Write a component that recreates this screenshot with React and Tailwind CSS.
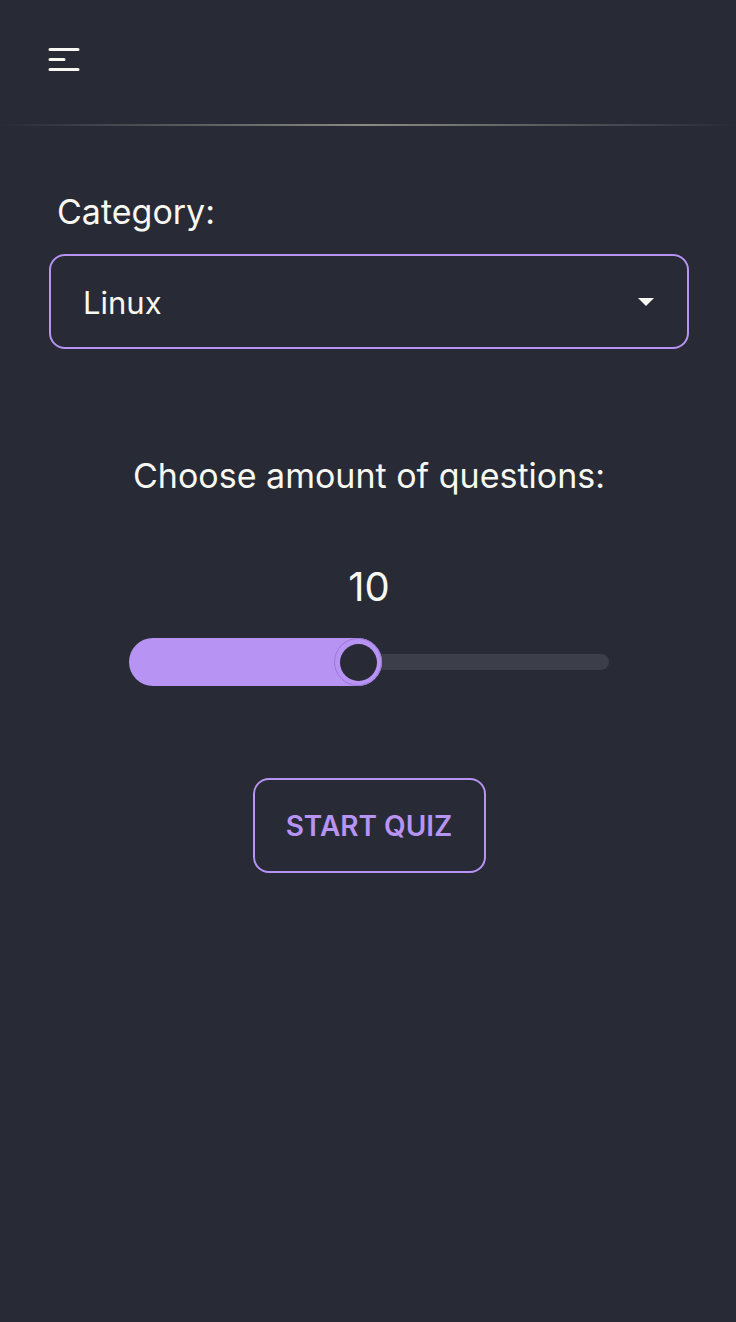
import { useState } from 'react'

function MenuIcon() {
  return (
    <svg width="32" height="26" viewBox="0 0 32 26" fill="none">
      <path d="M2 2.5h28M2 12.5h14M2 22.5h28" stroke="#f8f8f2" strokeWidth="3" strokeLinecap="round" />
    </svg>
  )
}

export default function App() {
  const [amount] = useState(10)

  return (
    <div
      className="min-h-[1322px] w-full bg-[#282a36] text-[#f8f8f2]"
      style={{ fontFamily: 'Inter, "Noto Sans", sans-serif' }}
    >
      <header className="h-[124px] flex items-center px-[48px] pb-[4px]">
        <button className="flex items-center">
          <MenuIcon />
        </button>
      </header>
      <div className="h-[2px] bg-gradient-to-r from-transparent via-[#8a8a86] to-transparent" />

      <main className="pl-[49px] pr-[47px] pt-[66px]">
        <label className="block pl-[8px] text-[34px] leading-[40px]">Category:</label>
        <div className="mt-[22px] h-[95px] rounded-[16px] border-2 border-[#b794f4] flex items-center justify-between pl-[32px] pr-[32px] pt-[3px]">
          <span className="text-[31px]">Linux</span>
          <span className="w-0 h-0 border-l-[8px] border-r-[8px] border-t-[8px] border-l-transparent border-r-transparent border-t-[#f8f8f2] mr-[1px] mb-[3px]" />
        </div>

        <p className="mt-[107px] text-center text-[34px] leading-[40px]">Choose amount of questions:</p>
        <p className="mt-[67px] text-center text-[40px] leading-[48px]">{amount}</p>

        <div className="mt-[27px] mx-auto w-[480px] h-[48px] relative flex items-center">
          <div className="absolute left-0 right-0 h-[16px] rounded-full bg-[#3c3e4a]" />
          <div className="absolute left-0 h-[48px] rounded-full bg-[#b794f4]" style={{ width: '253px' }} />
          <div className="absolute left-[205px] w-[48px] h-[48px] rounded-full bg-[#b794f4] border border-[#9b78d8] flex items-center justify-center">
            <div className="w-[37px] h-[37px] rounded-full bg-[#282a36]" />
          </div>
        </div>

        <div className="mt-[92px] flex justify-center">
          <button className="w-[233px] h-[95px] rounded-[16px] border-2 border-[#b794f4] text-[#b794f4] text-[28px] font-semibold">
            START QUIZ
          </button>
        </div>
      </main>
    </div>
  )
}
